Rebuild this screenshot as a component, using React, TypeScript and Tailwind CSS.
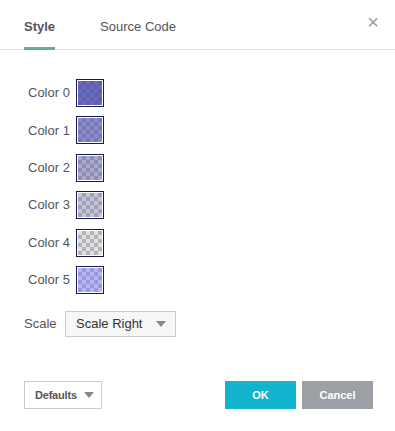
import React from "react";

const colors = [
  "rgba(70,70,170,0.8)",
  "rgba(90,90,175,0.7)",
  "rgba(100,100,170,0.55)",
  "rgba(110,110,160,0.4)",
  "rgba(130,130,150,0.25)",
  "rgba(110,110,240,0.5)",
];

function Swatch({ color }: { color: string }) {
  return (
    <div className="w-[28px] h-[28px] border border-[#1a1a4a] bg-white p-[1px]">
      <div
        className="w-full h-full relative"
        style={{
          backgroundColor: "#fff",
          backgroundImage:
            "linear-gradient(45deg,#c4c4c4 25%,transparent 25%,transparent 75%,#c4c4c4 75%),linear-gradient(45deg,#c4c4c4 25%,transparent 25%,transparent 75%,#c4c4c4 75%)",
          backgroundSize: "8px 8px",
          backgroundPosition: "0 0,4px 4px",
        }}
      >
        <div className="absolute inset-0" style={{ backgroundColor: color }} />
      </div>
    </div>
  );
}

function Caret() {
  return (
    <svg width="10" height="6" viewBox="0 0 10 6" className="shrink-0">
      <path d="M0 0 L10 0 L5 6 Z" fill="#888" />
    </svg>
  );
}

export default function App() {
  return (
    <div
      className="w-[395px] h-[431px] bg-white relative text-[#444]"
      style={{ fontFamily: '"Liberation Sans", Arial, sans-serif' }}
    >
      <div className="flex items-end h-[50px] border-b border-[#e3e3e3] px-[24px] gap-[45px]">
        <div className="relative h-full flex items-center pt-[5px] font-bold text-[13px] text-[#555]">
          Style
          <div className="absolute left-0 right-0 bottom-[-1px] h-[3px] bg-[#5cb38c]" />
        </div>
        <div className="h-full flex items-center pt-[5px] text-[13px] text-[#555]">
          Source Code
        </div>
      </div>
      <div className="absolute right-[16px] top-[12px] text-[#999] text-[20px] leading-none">
        ×
      </div>

      <div className="flex flex-col gap-[9.4px] pl-[28px] pt-[29px]">
        {colors.map((c, i) => (
          <div key={i} className="flex items-center h-[28px]">
            <div className="w-[48px] text-[13px] text-[#555]">Color {i}</div>
            <Swatch color={c} />
          </div>
        ))}
      </div>

      <div className="flex items-center pl-[24px] pt-[17px]">
        <div className="w-[41px] text-[13px] text-[#555]">Scale</div>
        <div className="w-[111px] h-[26px] border border-[#ccc] bg-[#f7f7f7] flex items-center justify-between pl-[10px] pr-[9px] text-[13px] text-[#333]">
          <span>Scale Right</span>
          <Caret />
        </div>
      </div>

      <div className="flex items-center justify-between pl-[24px] pr-[22px] pt-[44px]">
        <div className="w-[78px] h-[28px] border border-[#ccc] bg-white flex items-center gap-[7px] pl-[10px] text-[11px] font-bold text-[#555] tracking-[-0.2px]">
          <span>Defaults</span>
          <Caret />
        </div>
        <div className="flex gap-[6px]">
          <div className="w-[71px] h-[28px] bg-[#12b4cf] text-white text-[11px] font-bold flex items-center justify-center">
            OK
          </div>
          <div className="w-[71px] h-[28px] bg-[#9c9fa4] text-white text-[11px] font-bold flex items-center justify-center">
            Cancel
          </div>
        </div>
      </div>
    </div>
  );
}
